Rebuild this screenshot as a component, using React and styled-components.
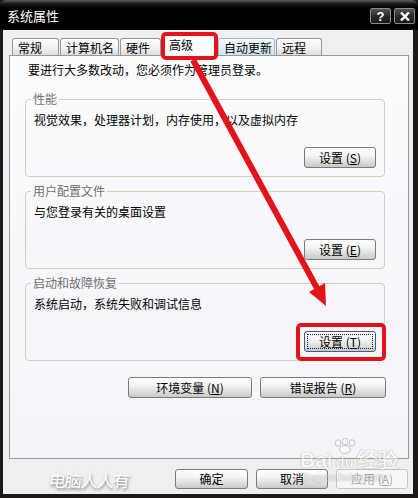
import React from 'react';
import styled, { createGlobalStyle } from 'styled-components';

const GlobalStyle = createGlobalStyle`
  html, body {
    margin: 0;
    padding: 0;
    background: #000;
  }
  body {
    width: 418px;
    height: 498px;
    overflow: hidden;
    font-family: "Noto Sans CJK SC", "Noto Sans", sans-serif;
    font-size: 12px;
    color: #000;
  }
`;

const Window = styled.div`
  position: relative;
  width: 418px;
  height: 498px;
  display: flex;
  flex-direction: column;
  background: #1c1917;
`;

const TitleBar = styled.div`
  height: 30px;
  flex: none;
  display: flex;
  align-items: center;
  padding: 0 3px 0 7px;
  border-radius: 6px 6px 0 0;
  background: linear-gradient(#5c5c5c 0, #151515 4px, #000 8px, #000 100%);
`;

const Title = styled.div`
  flex: 1;
  color: #fff;
  font-size: 13px;
  line-height: 16px;
  padding-top: 1px;
`;

const CaptionButton = styled.div`
  width: 21px;
  height: 16px;
  margin-left: 3px;
  margin-top: 2px;
  box-sizing: border-box;
  border: 1px solid #8c8c8c;
  border-radius: 2px;
  background: linear-gradient(#555 0%, #2a2a2a 50%, #1a1a1a 100%);
  color: #fff;
  display: flex;
  align-items: center;
  justify-content: center;
  font-family: "Liberation Sans", sans-serif;
  font-weight: bold;
  font-size: 13px;
`;

const Body = styled.div`
  flex: 1;
  margin: 0 5px 4px 3px;
  padding: 0 4px 5px 6px;
  background: #efefef;
  display: flex;
  flex-direction: column;
`;

const TabRow = styled.div`
  height: 25px;
  flex: none;
  display: flex;
  align-items: flex-end;
  padding-left: 3px;
  position: relative;
  z-index: 1;
`;

const Tab = styled.div`
  width: ${p => p.$w}px;
  height: ${p => (p.$active ? 23 : 17)}px;
  margin-right: 1px;
  margin-bottom: ${p => (p.$active ? -1 : 0)}px;
  box-sizing: border-box;
  padding: ${p => (p.$active ? '3px 0 0 6px' : '1px 0 0 5px')};
  line-height: 16px;
  white-space: nowrap;
  overflow: hidden;
  border: 1px solid ${p => (p.$hover ? '#9cbde0' : '#919b9c')};
  border-bottom: none;
  border-radius: 3px 3px 0 0;
  background: ${p =>
    p.$active
      ? '#fcfcfe'
      : p.$hover
      ? 'linear-gradient(#f4f9fe, #dcebf9 70%, #cfe2f5)'
      : 'linear-gradient(#ffffff, #f0f0f0 60%, #dcdcdc)'};
`;

const Panel = styled.div`
  flex: 1;
  border: 1px solid #919b9c;
  background: linear-gradient(#fcfcfe, #f3f3f9);
  padding: 6px 22px 0 15px;
  display: flex;
  flex-direction: column;
`;

const Intro = styled.div`
  margin-left: 3px;
  line-height: 16px;
`;

const Group = styled.fieldset`
  margin: ${p => p.$top}px 1px 0 0;
  padding: 6px 8px 8px 8px;
  min-width: 0;
  border: 1px solid #d0d0bf;
  border-radius: 4px;
`;

const Legend = styled.legend`
  padding: 0 2px;
  margin-left: -3px;
  line-height: 14px;
  color: #707070;
`;

const GroupText = styled.div`
  line-height: 16px;
`;

const ButtonRow = styled.div`
  display: flex;
  justify-content: flex-end;
  gap: 8px;
  margin-top: ${p => p.$top}px;
`;

const Button = styled.button`
  position: relative;
  width: ${p => p.$w}px;
  height: ${p => p.$h || 21}px;
  box-sizing: border-box;
  padding: 0;
  border: 1px solid ${p => (p.$focused ? '#3d5f8f' : p.disabled ? '#c6c6c6' : '#7a7a7a')};
  border-radius: 3px;
  background: ${p =>
    p.disabled
      ? '#f6f6f6'
      : 'linear-gradient(#ffffff 0%, #f4f4f4 40%, #e3e3e3 65%, #c8c8c8 100%)'};
  font-family: inherit;
  font-size: 12px;
  line-height: 16px;
  color: ${p => (p.disabled ? '#a8a8a8' : '#000')};
  &::after {
    content: '';
    display: ${p => (p.$focused ? 'block' : 'none')};
    position: absolute;
    inset: 2px;
    border: 1px dotted #222;
  }
`;

const Key = styled.span`
  text-decoration: underline;
`;

const Footer = styled.div`
  flex: none;
  height: 20px;
  margin-top: 10px;
  padding-right: 1px;
  display: flex;
  align-items: center;
  gap: 8px;
`;

const Signature = styled.div`
  flex: 1;
  padding-left: 40px;
  font-size: 17px;
  letter-spacing: -1px;
  color: #fff;
  transform: skewX(-6deg);
  text-shadow: 1px 2px 3px rgba(0, 0, 0, 0.5);
`;

const Overlay = styled.svg`
  position: absolute;
  left: 0;
  top: 0;
  pointer-events: none;
  z-index: 5;
`;

const Baidu = styled.div`
  position: absolute;
  left: 300px;
  top: 438px;
  z-index: 4;
  pointer-events: none;
  opacity: 0.5;
  color: #fff;
  text-shadow: 0 0 1px #666, 0 0 1px #666;
  font-family: "Liberation Sans", sans-serif;
`;

const BaiduMark = styled.div`
  display: flex;
  align-items: flex-end;
  font-size: 21px;
  font-weight: bold;
  line-height: 24px;
`;

const PawStack = styled.div`
  display: flex;
  flex-direction: column;
  align-items: center;
  margin: 0 1px;
  font-size: 15px;
  line-height: 16px;
  padding-bottom: 2px;
`;

const BaiduUrl = styled.div`
  font-size: 10px;
  line-height: 12px;
  margin-left: 4px;
`;

const tabs = [
  { label: '常规', w: 47 },
  { label: '计算机名', w: 59 },
  { label: '硬件', w: 41 },
  { label: '高级', w: 55, active: true },
  { label: '自动更新', w: 57, hover: true },
  { label: '远程', w: 46 },
];

const groups = [
  { title: '性能', text: '视觉效果，处理器计划，内存使用，以及虚拟内存', key: 'S', top: 14 },
  { title: '用户配置文件', text: '与您登录有关的桌面设置', key: 'E', top: 7 },
  { title: '启动和故障恢复', text: '系统启动，系统失败和调试信息', key: 'T', top: 7, focused: true },
];

const Label = ({ text, k }) => (
  <>
    {text} (<Key>{k}</Key>)
  </>
);

const Paw = () => (
  <svg width="22" height="16" viewBox="0 0 22 16">
    <g fill="#fff" stroke="#777" strokeWidth="0.8">
      <ellipse cx="4" cy="5" rx="2.8" ry="3.2" />
      <ellipse cx="11" cy="3.4" rx="2.8" ry="3.2" />
      <ellipse cx="18" cy="5" rx="2.8" ry="3.2" />
      <ellipse cx="11" cy="11.5" rx="5.5" ry="4" />
    </g>
  </svg>
);

export default function App() {
  return (
    <Window>
      <GlobalStyle />
      <TitleBar>
        <Title>系统属性</Title>
        <CaptionButton>?</CaptionButton>
        <CaptionButton>
          <svg width="10" height="9" viewBox="0 0 10 9">
            <path d="M1 0.5 L9 8.5 M9 0.5 L1 8.5" stroke="#fff" strokeWidth="2.4" />
          </svg>
        </CaptionButton>
      </TitleBar>
      <Body>
        <TabRow>
          {tabs.map(t => (
            <Tab key={t.label} $w={t.w} $active={t.active} $hover={t.hover}>
              {t.label}
            </Tab>
          ))}
        </TabRow>
        <Panel>
          <Intro>要进行大多数改动，您必须作为管理员登录。</Intro>
          {groups.map(g => (
            <Group key={g.title} $top={g.top}>
              <Legend>{g.title}</Legend>
              <GroupText>{g.text}</GroupText>
              <ButtonRow $top={19}>
                <Button $w={72} $focused={g.focused}>
                  <Label text="设置" k={g.key} />
                </Button>
              </ButtonRow>
            </Group>
          ))}
          <ButtonRow $top={16}>
            <Button $w={124}>
              <Label text="环境变量" k="N" />
            </Button>
            <Button $w={126}>
              <Label text="错误报告" k="R" />
            </Button>
          </ButtonRow>
        </Panel>
        <Footer>
          <Signature>电脑人人有</Signature>
          <Button $w={73} $h={20}>确定</Button>
          <Button $w={72} $h={20}>取消</Button>
          <Button $w={72} $h={20} disabled>
            <Label text="应用" k="A" />
          </Button>
        </Footer>
      </Body>
      <Baidu>
        <BaiduMark>
          Bai
          <PawStack>
            <Paw />
            du
          </PawStack>
          经验
        </BaiduMark>
        <BaiduUrl>jingyan.baidu.com</BaiduUrl>
      </Baidu>
      <Overlay width="418" height="498" viewBox="0 0 418 498">
        <rect x="163" y="34" width="53" height="24" rx="3" fill="none" stroke="#e4121b" strokeWidth="4" />
        <rect x="298" y="325" width="86" height="34" rx="3" fill="none" stroke="#e4121b" strokeWidth="4" />
        <line x1="193" y1="60" x2="318" y2="290" stroke="#e4121b" strokeWidth="6" />
        <polygon points="326,306 309,292 325,283" fill="#e4121b" />
      </Overlay>
    </Window>
  );
}
